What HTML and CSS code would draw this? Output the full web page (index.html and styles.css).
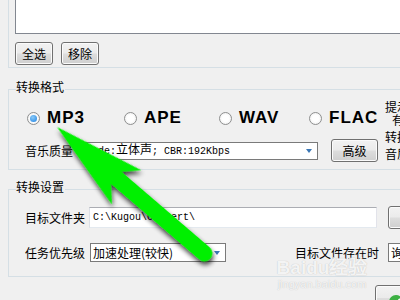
FILE: index.html
```html
<!DOCTYPE html>
<html lang="zh-CN">
<head>
<meta charset="utf-8">
<title>转换格式</title>
<link rel="stylesheet" href="styles.css">
</head>
<body>
<div class="group top">
  <div class="listbox"></div>
  <div class="btnrow">
    <button class="btn small">全选</button>
    <button class="btn small">移除</button>
  </div>
</div>

<div class="group fmt">
  <span class="legend">转换格式</span>
  <div class="fmt-body">
    <div class="fmt-main">
      <div class="radios">
        <label class="radio checked"><span class="circle"></span><span class="rtext">MP3</span></label>
        <label class="radio"><span class="circle"></span><span class="rtext">APE</span></label>
        <label class="radio"><span class="circle"></span><span class="rtext">WAV</span></label>
        <label class="radio"><span class="circle"></span><span class="rtext">FLAC</span></label>
      </div>
      <div class="qrow">
        <span class="lbl">音乐质量</span>
        <div class="combo quality"><span class="val mono">Mode:<span class="cjk">立体声</span>; CBR:192Kbps</span><span class="drop"></span></div>
        <button class="btn adv">高级</button>
      </div>
    </div>
    <div class="note">
      <p class="l1">提示：当</p>
      <p class="l2">有损格式</p>
      <p class="l3">转换为无</p>
      <p class="l4">音质</p>
    </div>
  </div>
</div>

<div class="group set">
  <span class="legend">转换设置</span>
  <div class="rows">
    <div class="row r1">
      <span class="lbl">目标文件夹</span>
      <div class="input path"><span class="mono">C:\Kugou\Convert\</span></div>
      <button class="btn browse">…</button>
    </div>
    <div class="row r2">
      <span class="lbl">任务优先级</span>
      <div class="combo prio"><span class="val">加速处理(较快)</span><span class="drop"></span></div>
      <span class="lbl exist">目标文件存在时</span>
      <div class="combo ask"><span class="val">询问</span></div>
    </div>
  </div>
</div>

<div class="bottom">
  <button class="btn ok"><svg class="okicon" width="16" height="16" viewBox="0 0 16 16"><circle cx="8" cy="8" r="7" fill="#3cb043"/><path d="M4 8 L7 11 L12 5" stroke="#fff" stroke-width="2" fill="none"/></svg></button>
</div>

<div class="watermark">
  <div class="wm-logo">Bai<span class="paw">du</span>经验</div>
  <div class="wm-url">jingyan.baidu.com</div>
</div>

<svg class="overlay" width="400" height="300" viewBox="0 0 400 300">
  <defs>
    <filter id="sh" x="-30%" y="-60%" width="160%" height="220%">
      <feGaussianBlur in="SourceAlpha" stdDeviation="2.5"/>
      <feOffset dx="3" dy="2" result="b"/>
      <feComponentTransfer><feFuncA type="linear" slope="0.75"/></feComponentTransfer>
      <feMerge><feMergeNode/><feMergeNode in="SourceGraphic"/></feMerge>
    </filter>
  </defs>
  <g filter="url(#sh)" transform="translate(57 127) rotate(40.6)" fill="#00f000">
    <polygon points="0,0 92,-22 78,-8 194,-8 194,8 78,8 92,23"/>
    <circle cx="194" cy="0" r="8"/>
  </g>
</svg>
</body>
</html>
```

FILE: styles.css
```css
html, body {
  margin: 0;
  padding: 0;
}
body {
  width: 400px;
  height: 300px;
  overflow: hidden;
  position: relative;
  background: #f0f0f0;
  font-family: "Noto Sans CJK SC", "Noto Sans", sans-serif;
  font-size: 12px;
  color: #000;
}
p { margin: 0; }

.group {
  margin-left: 8px;
  width: 440px;
  border: 1px solid #d5dfe5;
  border-right: none;
}
.group.top {
  height: 67px;
  border-top: none;
  padding-left: 6px;
}
.listbox {
  height: 33px;
  background: #fff;
  border: 1px solid #828790;
  border-top: none;
}
.btnrow {
  display: flex;
  gap: 8px;
  margin-top: 8px;
}
.btn {
  font-family: "Noto Sans CJK SC", sans-serif;
  font-size: 12px;
  line-height: 14px;
  color: #000;
  padding: 0;
  border: 1px solid #707070;
  border-radius: 3px;
  background: linear-gradient(#f2f2f2 0%, #ebebeb 48%, #dddddd 52%, #cfcfcf 100%);
  box-shadow: inset 0 0 0 1px #fbfbfb;
}
.btn.small {
  width: 38px;
  height: 23px;
}

.legend {
  display: block;
  width: fit-content;
  margin: -10px 0 0 7px;
  padding: 0 1px 0 0;
  line-height: 14px;
  background: #f0f0f0;
}

.group.fmt {
  margin-top: 21px;
}
.fmt-body {
  display: flex;
}
.fmt-main {
  width: 360px;
  padding-left: 16px;
  padding-bottom: 7px;
}
.radios {
  display: grid;
  grid-template-columns: 97px 95px 90px auto;
  height: 20px;
  margin-top: 14px;
  padding-left: 2px;
  align-items: center;
}
.radio {
  display: flex;
  align-items: center;
  gap: 7px;
}
.circle {
  width: 11px;
  height: 11px;
  border: 1px solid #8e8f8f;
  border-radius: 50%;
  background: radial-gradient(circle at 50% 50%, #ffffff 40%, #e9e9e9 100%);
  position: relative;
}
.radio.checked .circle::after {
  content: "";
  position: absolute;
  left: 2px;
  top: 2px;
  width: 7px;
  height: 7px;
  border-radius: 50%;
  background: radial-gradient(circle at 40% 35%, #8ccaf7 0%, #3d97e9 70%, #2a7fd0 100%);
}
.rtext {
  font-family: "Liberation Sans", Arial, sans-serif;
  font-weight: bold;
  font-size: 17px;
  letter-spacing: 1px;
  line-height: 20px;
}
.qrow {
  display: flex;
  align-items: center;
  height: 23px;
  margin-top: 11px;
}
.lbl {
  line-height: 14px;
  white-space: nowrap;
}
.combo, .input {
  box-sizing: border-box;
  background: #fff;
  border: 1px solid #7a7a7a;
  display: flex;
  align-items: center;
  position: relative;
  overflow: hidden;
  white-space: nowrap;
}
.combo.quality {
  width: 236px;
  height: 18px;
  margin-left: 9px;
  padding-left: 3px;
}
.mono {
  font-family: "Liberation Mono", "Noto Sans CJK SC", monospace;
  font-size: 10px;
}
.cjk {
  font-family: "Noto Sans CJK SC", sans-serif;
  font-size: 12px;
}
.val {
  line-height: 14px;
}
.drop {
  position: absolute;
  right: 5px;
  top: 50%;
  margin-top: -2px;
  width: 0;
  height: 0;
  border-left: 3.5px solid transparent;
  border-right: 3.5px solid transparent;
  border-top: 4px solid #3a76b5;
}
.btn.adv {
  width: 47px;
  height: 23px;
  margin-left: 13px;
}
.note {
  padding-top: 6px;
  line-height: 13px;
  white-space: nowrap;
}
.note .l2 { padding-left: 7px; }
.note .l3 { margin-top: 4px; }
.note .l4 { margin-top: 4px; }

.group.set {
  margin-top: 19px;
  padding-bottom: 14px;
}
.rows {
  padding-left: 16px;
}
.row {
  display: flex;
  align-items: center;
}
.row.r1 {
  margin-top: 12px;
  height: 23px;
}
.input.path {
  width: 288px;
  height: 21px;
  margin-left: 4px;
  padding-left: 3px;
  border-color: #abadb3 #e2e3ea #e3e9ef #dbdfe6;
}
.btn.browse {
  width: 40px;
  height: 23px;
  margin-left: 11px;
  color: transparent;
}
.row.r2 {
  margin-top: 14px;
  height: 19px;
}
.combo.prio {
  width: 136px;
  height: 19px;
  margin-left: 5px;
  padding-left: 2px;
}
.lbl.exist {
  margin-left: 69px;
}
.combo.ask {
  width: 60px;
  height: 19px;
  margin-left: 9px;
  padding-left: 2px;
}

.bottom {
  margin-top: 8px;
  padding-left: 375px;
}
.btn.ok {
  width: 80px;
  height: 26px;
  display: block;
  padding: 8px 0 0 12px;
  text-align: left;
}
.okicon { display: block; }

.watermark {
  position: absolute;
  left: 252px;
  top: 258px;
  width: 140px;
  text-align: center;
  color: rgba(255, 255, 255, 0.85);
  text-shadow: 0 0 1px rgba(0, 0, 0, 0.25);
  pointer-events: none;
}
.wm-logo {
  font-family: "Liberation Sans", Arial, sans-serif;
  font-weight: bold;
  font-size: 19px;
  line-height: 20px;
}
.wm-url {
  font-family: "Liberation Sans", Arial, sans-serif;
  font-size: 11px;
  line-height: 12px;
}

.overlay {
  position: absolute;
  left: 0;
  top: 0;
  pointer-events: none;
}
```
